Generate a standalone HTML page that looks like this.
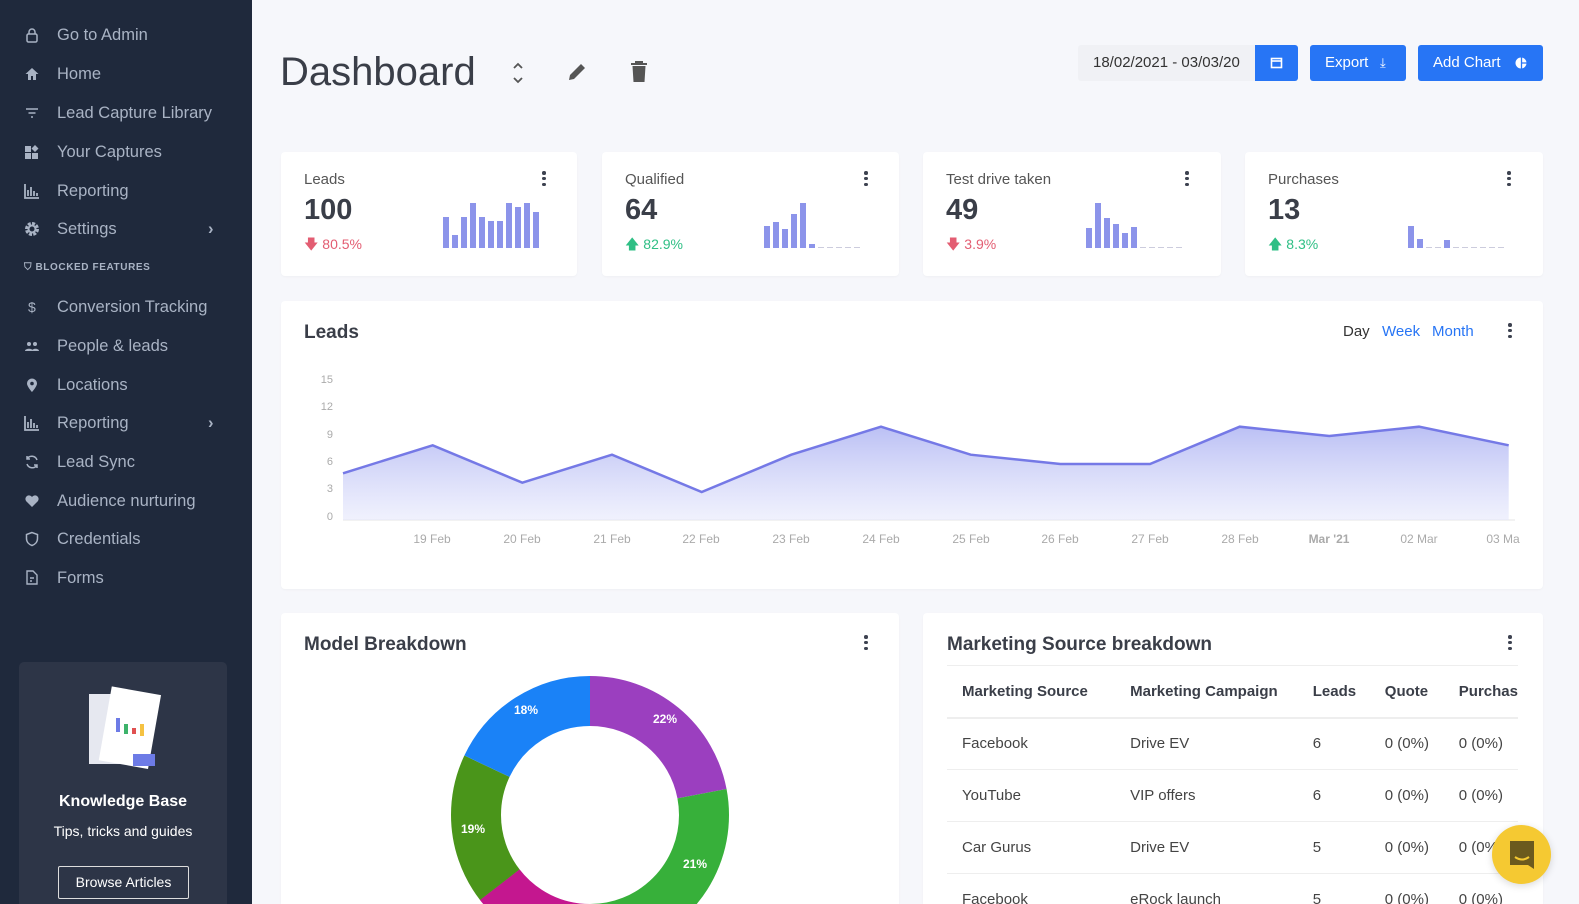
<!DOCTYPE html>
<html><head><meta charset="utf-8"><style>
*{margin:0;padding:0;box-sizing:border-box}
html,body{width:1579px;height:904px;overflow:hidden}
body{background:#f6f7fb;font-family:"Liberation Sans",sans-serif;color:#3d4250}
#w{position:relative;width:1579px;height:904px;overflow:hidden;background:#f6f7fb}
.sb{position:absolute;left:0;top:0;width:252px;height:904px;background:#1f293c}
.it{position:absolute;left:0;width:252px;height:24px;color:#a9b3c4;font-size:16.5px;line-height:24px}
.it span{position:absolute;left:57px}
.it svg{position:absolute;left:24px;top:4px}
.it .ch{position:absolute;left:208px;top:0;color:#a9b3c4}
.kb{position:absolute;left:19px;top:662px;width:208px;height:242px;background:#2d3547;border-radius:5px 5px 0 0;text-align:center;color:#fff;overflow:hidden}
.card{position:absolute;background:#fff;border-radius:4px;box-shadow:0 1px 2px rgba(0,0,0,.03)}
.dots{position:absolute;width:4px}
.dots i{display:block;width:3.5px;height:3.5px;border-radius:50%;background:#3d4250;margin-bottom:2.3px}
.lbl{position:absolute;left:23px;top:19px;font-size:15px;color:#555}
.num{position:absolute;left:23px;top:42px;font-size:29px;font-weight:bold;color:#3a3e48}
.pct{position:absolute;left:23px;top:82px;font-size:14px}
.bars{position:absolute;bottom:28px;display:flex;align-items:flex-end;gap:3.5px}
.bars b{display:block;width:5.5px;background:#8c94ea}
.bars u{display:block;width:5.5px;height:1px;background:#ccd;text-decoration:none}
.btn{position:absolute;top:45px;height:36px;background:#2775f5;color:#fff;border-radius:3px;font-size:15px;line-height:36px}
h3{position:absolute;font-size:19px;font-weight:bold;color:#3a3e48}
table{border-collapse:collapse;position:absolute;left:24px;top:52px;width:571px;font-size:15px}
th{text-align:left;font-weight:bold;color:#3a3e48;height:52px;border-top:1px solid #eee;border-bottom:2px solid #eee;padding-left:15px;white-space:nowrap}
td{height:52px;border-bottom:1px solid #eee;padding-left:15px;color:#444;white-space:nowrap}
</style></head><body><div id="w">
<div class="sb">
<div class="it" style="top:23px"><svg width="16" height="16" viewBox="0 0 16 16"><rect x="3" y="7" width="10" height="8" rx="1.5" fill="none" stroke="#a9b3c4" stroke-width="1.5"/><path d="M5 7V5a3 3 0 0 1 6 0v2" fill="none" stroke="#a9b3c4" stroke-width="1.5"/></svg><span>Go to Admin</span></div>
<div class="it" style="top:62px"><svg width="16" height="16" viewBox="0 0 16 16"><path d="M8 2L1.5 8H4v6h3v-4h2v4h3V8h2.5z" fill="#a9b3c4"/></svg><span>Home</span></div>
<div class="it" style="top:101px"><svg width="16" height="16" viewBox="0 0 16 16"><path d="M2 4h12M4.5 8h7M7 12h2" stroke="#a9b3c4" stroke-width="1.5"/></svg><span>Lead Capture Library</span></div>
<div class="it" style="top:140px"><svg width="16" height="16" viewBox="0 0 16 16"><path d="M1 2h6v6H1zM1 9h6v6H1zM8 9h6v6H8zM11 1l3.5 3.5L11 8 7.5 4.5z" fill="#a9b3c4"/></svg><span>Your Captures</span></div>
<div class="it" style="top:179px"><svg width="16" height="16" viewBox="0 0 16 16"><path d="M1 1v14h14M4 13V7M7 13V4M10 13V8M13 13v-3" stroke="#a9b3c4" stroke-width="1.8" fill="none"/></svg><span>Reporting</span></div>
<div class="it" style="top:217px"><svg width="16" height="16" viewBox="0 0 16 16"><circle cx="8" cy="8" r="5.5" fill="none" stroke="#a9b3c4" stroke-width="3" stroke-dasharray="3 1.3"/><circle cx="8" cy="8" r="3.5" fill="none" stroke="#a9b3c4" stroke-width="2"/></svg><span>Settings</span><b class="ch">›</b></div>
<div style="position:absolute;left:24px;top:262px;font-size:10px;font-weight:bold;color:#a9b3c4;letter-spacing:.6px">⛉ BLOCKED FEATURES</div>
<div class="it" style="top:295px"><svg width="16" height="16"><text x="4" y="13" fill="#a9b3c4" font-size="14">$</text></svg><span>Conversion Tracking</span></div>
<div class="it" style="top:334px"><svg width="16" height="16" viewBox="0 0 16 16"><circle cx="5" cy="6" r="2" fill="#a9b3c4"/><circle cx="11" cy="6" r="2" fill="#a9b3c4"/><path d="M1 13c0-3 8-3 8 0zM8 13c0-3 7-3 7 0z" fill="#a9b3c4"/></svg><span>People &amp; leads</span></div>
<div class="it" style="top:373px"><svg width="16" height="16" viewBox="0 0 16 16"><path d="M8 15S3 9.5 3 6.5a5 5 0 0 1 10 0C13 9.5 8 15 8 15z" fill="#a9b3c4"/><circle cx="8" cy="6.5" r="1.8" fill="#1f293c"/></svg><span>Locations</span></div>
<div class="it" style="top:411px"><svg width="16" height="16" viewBox="0 0 16 16"><path d="M1 1v14h14M4 13V7M7 13V4M10 13V8M13 13v-3" stroke="#a9b3c4" stroke-width="1.8" fill="none"/></svg><span>Reporting</span><b class="ch">›</b></div>
<div class="it" style="top:450px"><svg width="16" height="16" viewBox="0 0 16 16"><path d="M13 6A5.5 5.5 0 0 0 3 5M3 10a5.5 5.5 0 0 0 10 1M3 2v3h3M13 14v-3h-3" fill="none" stroke="#a9b3c4" stroke-width="1.5"/></svg><span>Lead Sync</span></div>
<div class="it" style="top:489px"><svg width="16" height="16" viewBox="0 0 16 16"><path d="M8 14L2 8a3.5 3.5 0 0 1 6-4 3.5 3.5 0 0 1 6 4z" fill="#a9b3c4"/></svg><span>Audience nurturing</span></div>
<div class="it" style="top:527px"><svg width="16" height="16" viewBox="0 0 16 16"><path d="M8 1.5L2.5 3.5v4c0 3.5 2.5 6 5.5 7 3-1 5.5-3.5 5.5-7v-4z" fill="none" stroke="#a9b3c4" stroke-width="1.5"/></svg><span>Credentials</span></div>
<div class="it" style="top:566px"><svg width="16" height="16" viewBox="0 0 16 16"><path d="M3 1h6l4 4v9H3z M6 8h4M6 11h2" fill="none" stroke="#a9b3c4" stroke-width="1.4"/></svg><span>Forms</span></div>
<div class="kb">
<svg width="120" height="100" style="position:absolute;left:50px;top:20px" viewBox="0 0 120 100"><rect x="20" y="12" width="45" height="70" fill="#e6e8f0"/><rect x="36" y="8" width="50" height="75" fill="#fff" transform="rotate(10 60 45)"/><rect x="47" y="36" width="4" height="14" fill="#6d7be6"/><rect x="55" y="42" width="4" height="10" fill="#3db36b"/><rect x="63" y="46" width="4" height="6" fill="#e05050"/><rect x="71" y="42" width="4" height="12" fill="#f5c242"/><rect x="64" y="72" width="22" height="12" fill="#6d7be6"/></svg>
<div style="position:absolute;top:131px;width:100%;font-size:16px;font-weight:bold">Knowledge Base</div>
<div style="position:absolute;top:161px;width:100%;font-size:14px">Tips, tricks and guides</div>
<div style="position:absolute;left:39px;top:204px;width:131px;height:33px;border:1px solid #ddd;border-radius:2px;font-size:14px;line-height:31px">Browse Articles</div>
</div>
</div>

<div style="position:absolute;left:280px;top:50px;font-size:40px;color:#3a3e48">Dashboard</div>
<svg style="position:absolute;left:511px;top:60px" width="14" height="26" viewBox="0 0 14 26"><path d="M3 8l4-4 4 4M3 18l4 4 4-4" fill="none" stroke="#555" stroke-width="1.8"/></svg>
<svg style="position:absolute;left:566px;top:61px" width="22" height="22" viewBox="0 0 22 22"><path d="M3 19l1-5L15 3l4 4L8 18z" fill="#555"/></svg>
<svg style="position:absolute;left:629px;top:60px" width="20" height="24" viewBox="0 0 20 24"><path d="M2 4h16M7 4V2h6v2" stroke="#555" stroke-width="2" fill="none"/><path d="M3.5 6h13l-1 16h-11z" fill="#555"/></svg>

<div style="position:absolute;left:1078px;top:45px;width:178px;height:36px;background:#f0f1f5;border-radius:3px 0 0 3px;font-size:15px;line-height:36px;padding-left:15px;overflow:hidden;white-space:nowrap;color:#333">18/02/2021 - 03/03/20</div>
<div class="btn" style="left:1255px;width:43px;border-radius:0 3px 3px 0"><svg style="position:absolute;left:15px;top:11px" width="13" height="13" viewBox="0 0 13 13"><rect x="1.5" y="2.5" width="10" height="9" fill="none" stroke="#fff" stroke-width="1.6"/><path d="M1.5 5h10" stroke="#fff" stroke-width="1.6"/></svg></div>
<div class="btn" style="left:1310px;width:96px;padding-left:15px">Export <span style="position:absolute;left:70px;font-size:13px">⤓</span></div>
<div class="btn" style="left:1418px;width:125px;padding-left:15px">Add Chart <svg style="position:absolute;left:97px;top:12px" width="12" height="12" viewBox="0 0 12 12"><circle cx="6" cy="6" r="5.5" fill="#fff"/><path d="M6.5 0v12M6.5 6h6" stroke="#2775f5" stroke-width="1.3"/></svg></div>

<div class="card" style="left:281px;top:152px;width:296px;height:124px">
<div class="lbl">Leads</div><div class="num">100</div><div class="pct" style="color:#e35d72">🡇 80.5%</div>
<div class="dots" style="left:261px;top:19px"><i></i><i></i><i></i></div>
<div class="bars" style="left:162px"><b style="height:31px"></b><b style="height:13px"></b><b style="height:31px"></b><b style="height:45px"></b><b style="height:31px"></b><b style="height:27px"></b><b style="height:27px"></b><b style="height:45px"></b><b style="height:41px"></b><b style="height:45px"></b><b style="height:36px"></b></div>
</div>
<div class="card" style="left:602px;top:152px;width:297px;height:124px">
<div class="lbl">Qualified</div><div class="num">64</div><div class="pct" style="color:#2fbf85">🡅 82.9%</div>
<div class="dots" style="left:262px;top:19px"><i></i><i></i><i></i></div>
<div class="bars" style="left:162px"><b style="height:22px"></b><b style="height:26px"></b><b style="height:19px"></b><b style="height:34px"></b><b style="height:45px"></b><b style="height:4px"></b><u></u><u></u><u></u><u></u><u></u></div>
</div>
<div class="card" style="left:923px;top:152px;width:298px;height:124px">
<div class="lbl">Test drive taken</div><div class="num">49</div><div class="pct" style="color:#e35d72">🡇 3.9%</div>
<div class="dots" style="left:262px;top:19px"><i></i><i></i><i></i></div>
<div class="bars" style="left:163px"><b style="height:20px"></b><b style="height:45px"></b><b style="height:30px"></b><b style="height:24px"></b><b style="height:15px"></b><b style="height:21px"></b><u></u><u></u><u></u><u></u><u></u></div>
</div>
<div class="card" style="left:1245px;top:152px;width:298px;height:124px">
<div class="lbl">Purchases</div><div class="num">13</div><div class="pct" style="color:#2fbf85">🡅 8.3%</div>
<div class="dots" style="left:262px;top:19px"><i></i><i></i><i></i></div>
<div class="bars" style="left:163px"><b style="height:22px"></b><b style="height:9px"></b><u></u><u></u><b style="height:8px"></b><u></u><u></u><u></u><u></u><u></u><u></u></div>
</div>

<div class="card" style="left:281px;top:301px;width:1262px;height:288px">
<h3 style="left:23px;top:21px">Leads</h3>
<div style="position:absolute;left:1062px;top:22px;font-size:15px;color:#333">Day</div>
<div style="position:absolute;left:1101px;top:22px;font-size:15px;color:#2775f5">Week</div>
<div style="position:absolute;left:1151px;top:22px;font-size:15px;color:#2775f5">Month</div>
<div class="dots" style="left:1227px;top:22px"><i></i><i></i><i></i></div>
</div>
<svg style="position:absolute;left:0;top:0" width="1579" height="904">
<defs><linearGradient id="g" x1="0" y1="0" x2="0" y2="1"><stop offset="0" stop-color="#aab0f2" stop-opacity=".8"/><stop offset="1" stop-color="#e6e8fc" stop-opacity=".6"/></linearGradient></defs>
<g font-family="Liberation Sans" font-size="11" fill="#aaa" text-anchor="end"><text x="333" y="383">15</text><text x="333" y="410">12</text><text x="333" y="438">9</text><text x="333" y="465">6</text><text x="333" y="492">3</text><text x="333" y="520">0</text></g>
<line x1="343" y1="520" x2="1515" y2="520" stroke="#e4e4e4"/>
<path d="M343 473.3L432.7 445.3L522.3 482.7L612 454.7L701.7 492L791.3 454.7L881 426.7L970.7 454.7L1060.3 464L1150 464L1239.7 426.7L1329.3 436L1419 426.7L1508.7 445.3L1508.7 520L343 520Z" fill="url(#g)"/>
<path d="M343 473.3L432.7 445.3L522.3 482.7L612 454.7L701.7 492L791.3 454.7L881 426.7L970.7 454.7L1060.3 464L1150 464L1239.7 426.7L1329.3 436L1419 426.7L1508.7 445.3" fill="none" stroke="#7579e6" stroke-width="2.5"/>
<g font-family="Liberation Sans" font-size="12" fill="#aaa" text-anchor="middle"><text x="432" y="543">19 Feb</text><text x="522" y="543">20 Feb</text><text x="612" y="543">21 Feb</text><text x="701" y="543">22 Feb</text><text x="791" y="543">23 Feb</text><text x="881" y="543">24 Feb</text><text x="971" y="543">25 Feb</text><text x="1060" y="543">26 Feb</text><text x="1150" y="543">27 Feb</text><text x="1240" y="543">28 Feb</text><text x="1329" y="543" font-weight="bold">Mar '21</text><text x="1419" y="543">02 Mar</text><text x="1503" y="543">03 Ma</text></g>
</svg>

<div class="card" style="left:281px;top:613px;width:618px;height:291px;border-radius:4px 4px 0 0">
<h3 style="left:23px;top:21px">Model Breakdown</h3>
<div class="dots" style="left:583px;top:22px"><i></i><i></i><i></i></div>
</div>
<svg style="position:absolute;left:440px;top:665px" width="300" height="239" viewBox="0 0 300 239">
<g transform="translate(150 150) rotate(-90)" fill="none" stroke-width="50">
<circle r="114" stroke="#9b3fbf" stroke-dasharray="157.6 716.3"/>
<circle r="114" stroke="#37b03a" stroke-dasharray="200.6 716.3" stroke-dashoffset="-157.6"/>
<circle r="114" stroke="#c4178f" stroke-dasharray="104 716.3" stroke-dashoffset="-358.2"/>
<circle r="114" stroke="#4a951a" stroke-dasharray="125.4 716.3" stroke-dashoffset="-462"/>
<circle r="114" stroke="#1a82f7" stroke-dasharray="129 716.3" stroke-dashoffset="-587.4"/>
</g>
<g font-family="Liberation Sans" font-size="12" font-weight="bold" fill="#fff" text-anchor="middle"><text x="86" y="49">18%</text><text x="225" y="58">22%</text><text x="33" y="168">19%</text><text x="255" y="203">21%</text></g>
</svg>
<div class="card" style="left:923px;top:613px;width:620px;height:291px;overflow:hidden;border-radius:4px 4px 0 0">
<h3 style="left:24px;top:21px">Marketing Source breakdown</h3>
<div class="dots" style="left:585px;top:22px"><i></i><i></i><i></i></div>
<table>
<tr><th style="width:170px">Marketing Source</th><th style="width:184px">Marketing Campaign</th><th style="width:73px">Leads</th><th style="width:75px">Quote</th><th>Purchas</th></tr>
<tr><td>Facebook</td><td>Drive EV</td><td>6</td><td>0 (0%)</td><td>0 (0%)</td></tr>
<tr><td>YouTube</td><td>VIP offers</td><td>6</td><td>0 (0%)</td><td>0 (0%)</td></tr>
<tr><td>Car Gurus</td><td>Drive EV</td><td>5</td><td>0 (0%)</td><td>0 (0%)</td></tr>
<tr><td>Facebook</td><td>eRock launch</td><td>5</td><td>0 (0%)</td><td>0 (0%)</td></tr>
</table>
</div>
<div style="position:absolute;left:1492px;top:825px;width:59px;height:59px;border-radius:50%;background:#f5c932;box-shadow:0 2px 8px rgba(0,0,0,.15)">
<svg style="position:absolute;left:15px;top:14px" width="30" height="32" viewBox="0 0 30 32"><path d="M3 2h24v28l-6-4H3z" fill="#6b5a1e"/><path d="M8 18q7 5 14 0" stroke="#f5c932" stroke-width="2" fill="none"/></svg>
</div>
</div></body></html>
